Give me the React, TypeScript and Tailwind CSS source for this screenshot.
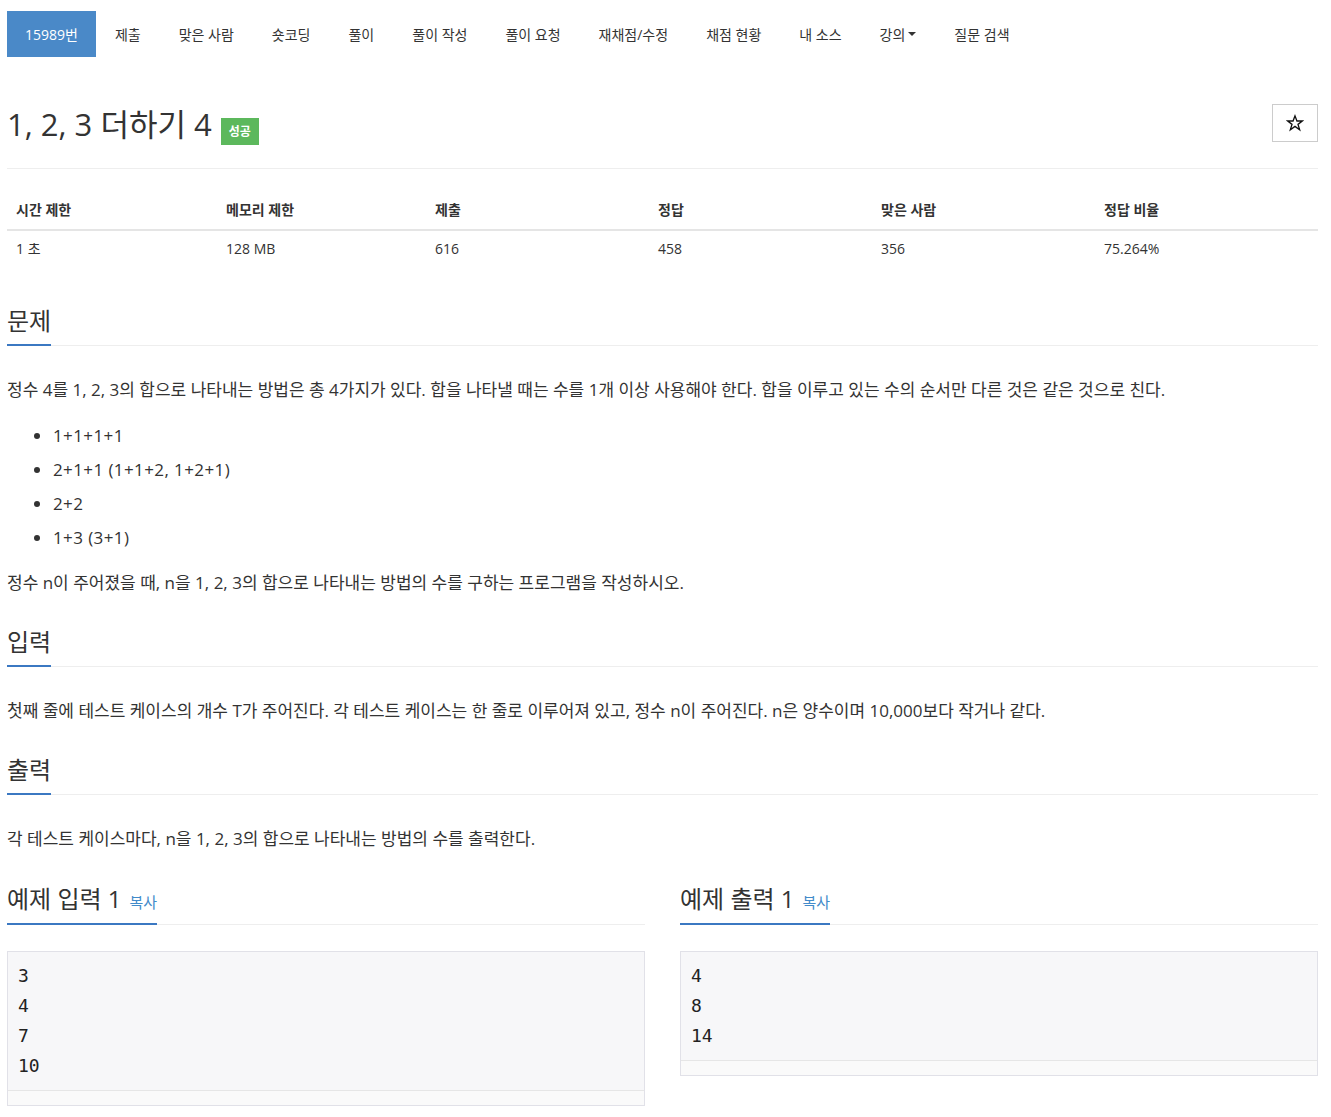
import React from "react";

const FONT = { fontFamily: '"Open Sans", "Noto Sans CJK KR", sans-serif' };

function Nav() {
  const items = ["제출", "맞은 사람", "숏코딩", "풀이", "풀이 작성", "풀이 요청", "재채점/수정", "채점 현황", "내 소스"];
  return (
    <div className="flex items-center pt-[11px] text-[14px] text-[#333]">
      <div className="h-[46px] px-[18px] flex items-center bg-[#4a89c8] text-white">15989번</div>
      {items.map((t) => (
        <div key={t} className="h-[46px] px-[19px] flex items-center whitespace-nowrap">{t}</div>
      ))}
      <div className="h-[46px] px-[19px] flex items-center">
        강의
        <span className="ml-[3px] w-0 h-0 border-x-[4px] border-t-[4px] border-x-transparent border-t-[#333]" />
      </div>
      <div className="h-[46px] px-[19px] flex items-center">질문 검색</div>
    </div>
  );
}

function SectionHead({ title }: { title: string }) {
  return (
    <div className="border-b border-[#eee]">
      <h2 className="inline-block text-[24px] leading-[26px] pb-[10px] border-b-[2px] border-[#3b78c2] -mb-px text-[#333]">
        {title}
      </h2>
    </div>
  );
}

function SampleHead({ title }: { title: string }) {
  return (
    <div className="border-b border-[#eee]">
      <h2 className="inline-flex items-baseline text-[24px] leading-[26px] pb-[8px] border-b-[2px] border-[#3b78c2] -mb-px text-[#333]">
        {title}
        <span className="ml-[8px] text-[15px] text-[#428bca]">복사</span>
      </h2>
    </div>
  );
}

function Pre({ lines }: { lines: string[] }) {
  return (
    <div className="mt-[26px] border border-[#e1e1e8] bg-[#f7f7f9]">
      <div
        className="pl-[10px] pt-[9px] pb-[9px] text-[18px] leading-[30px] text-[#222]"
        style={{ fontFamily: '"DejaVu Sans Mono", monospace' }}
      >
        {lines.map((l, i) => (
          <div key={i}>{l}</div>
        ))}
      </div>
      <div className="h-[15px] border-t border-[#e6e6e6] bg-[#fafafa]" />
    </div>
  );
}

function Star() {
  return (
    <svg width="18" height="18" viewBox="0 0 24 24" fill="none" stroke="#111" strokeWidth="1.8" strokeLinejoin="miter">
      <polygon points="12,2.5 14.6,9.3 21.8,9.3 16,13.8 18.2,21 12,16.6 5.8,21 8,13.8 2.2,9.3 9.4,9.3" />
    </svg>
  );
}

export default function App() {
  const cols = [
    ["시간 제한", "1 초", "w-[210px]"],
    ["메모리 제한", "128 MB", "w-[209px]"],
    ["제출", "616", "w-[223px]"],
    ["정답", "458", "w-[223px]"],
    ["맞은 사람", "356", "w-[223px]"],
    ["정답 비율", "75.264%", "w-[223px]"],
  ];
  return (
    <div className="min-h-[1117px] bg-white text-[#333]" style={FONT}>
      <div className="ml-[7px] w-[1311px]">
        <Nav />

        <div className="mt-[47px] flex justify-between">
          <h1 className="flex items-baseline text-[31px] leading-[40px] text-[#333]">
            1, 2, 3 더하기 4
            <span className="ml-[9px] px-[8px] h-[27px] leading-[27px] bg-[#5cb85c] text-white text-[12px] font-bold">성공</span>
          </h1>
          <div className="w-[46px] h-[38px] border border-[#ccc] flex items-center justify-center">
            <Star />
          </div>
        </div>
        <div className="mt-[23px] border-t border-[#eee]" />

        <div className="mt-[24px] text-[14px]">
          <div className="flex border-b-2 border-[#e5e5e5]">
            {cols.map((c) => (
              <div key={c[0]} className={`${c[2]} pl-[9px] pt-[7px] pb-[9px] leading-[20px] font-bold`}>{c[0]}</div>
            ))}
          </div>
          <div className="flex">
            {cols.map((c) => (
              <div key={c[0]} className={`${c[2]} pl-[9px] pt-[7px] pb-[9px] leading-[21px]`}>{c[1]}</div>
            ))}
          </div>
        </div>

        <div className="mt-[40px]">
          <SectionHead title="문제" />
          <div className="mt-[31px] text-[17px] leading-[26px]">
            <p>정수 4를 1, 2, 3의 합으로 나타내는 방법은 총 4가지가 있다. 합을 나타낼 때는 수를 1개 이상 사용해야 한다. 합을 이루고 있는 수의 순서만 다른 것은 같은 것으로 친다.</p>
            <ul className="mt-[20px] list-disc pl-[46px] tracking-[0.4px]">
              <li className="mb-[8px]">1+1+1+1</li>
              <li className="mb-[8px]">2+1+1 (1+1+2, 1+2+1)</li>
              <li className="mb-[8px]">2+2</li>
              <li>1+3 (3+1)</li>
            </ul>
            <p className="mt-[19px]">정수 n이 주어졌을 때, n을 1, 2, 3의 합으로 나타내는 방법의 수를 구하는 프로그램을 작성하시오.</p>
          </div>
        </div>

        <div className="mt-[33px]">
          <SectionHead title="입력" />
          <p className="mt-[31px] text-[17px] leading-[26px]">
            첫째 줄에 테스트 케이스의 개수 T가 주어진다. 각 테스트 케이스는 한 줄로 이루어져 있고, 정수 n이 주어진다. n은 양수이며 10,000보다 작거나 같다.
          </p>
        </div>

        <div className="mt-[33px]">
          <SectionHead title="출력" />
          <p className="mt-[31px] text-[17px] leading-[26px]">
            각 테스트 케이스마다, n을 1, 2, 3의 합으로 나타내는 방법의 수를 출력한다.
          </p>
        </div>

        <div className="mt-[34px] grid grid-cols-2 gap-x-[35px] items-start">
          <div>
            <SampleHead title="예제 입력 1" />
            <Pre lines={["3", "4", "7", "10"]} />
          </div>
          <div>
            <SampleHead title="예제 출력 1" />
            <Pre lines={["4", "8", "14"]} />
          </div>
        </div>
      </div>
    </div>
  );
}
